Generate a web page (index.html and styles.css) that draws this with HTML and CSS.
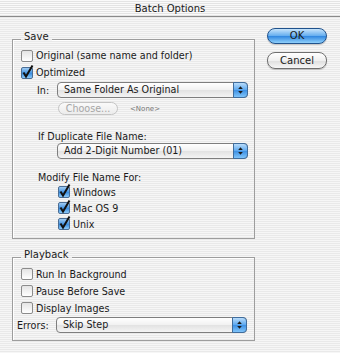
FILE: index.html
```html
<!DOCTYPE html>
<html lang="en">
<head>
  <meta charset="UTF-8" />
  <title>Batch Options</title>
  <link rel="stylesheet" href="styles.css">
</head>
<body>
  <div class="titlebar">Batch Options</div>

  <div class="dialog">
    <div class="groups">

      <div class="group save">
        <span class="legend">Save</span>
        <div class="check row"><span class="box"></span>Original (same name and folder)</div>
        <div class="check row"><span class="box on"><svg viewBox="0 0 12 12"><path d="M2.5 5.5 L5 9.5 L11.5 -1.5" /></svg></span>Optimized</div>

        <div class="in-row">
          <span class="field-label">In:</span>
          <div class="popup">Same Folder As Original<span class="arrows"><svg viewBox="0 0 14 14"><path d="M7 3 L9.5 6 L4.5 6 Z M7 11 L9.5 8 L4.5 8 Z" /></svg></span></div>
        </div>

        <div class="choose-row">
          <span class="choose">Choose...</span>
          <span class="none">&lt;None&gt;</span>
        </div>

        <div class="caption dup">If Duplicate File Name:</div>
        <div class="popup dup-popup">Add 2-Digit Number (01)<span class="arrows"><svg viewBox="0 0 14 14"><path d="M7 3 L9.5 6 L4.5 6 Z M7 11 L9.5 8 L4.5 8 Z" /></svg></span></div>

        <div class="caption modify">Modify File Name For:</div>
        <div class="os-list">
          <div class="check"><span class="box on"><svg viewBox="0 0 12 12"><path d="M2.5 5.5 L5 9.5 L11.5 -1.5" /></svg></span>Windows</div>
          <div class="check"><span class="box on"><svg viewBox="0 0 12 12"><path d="M2.5 5.5 L5 9.5 L11.5 -1.5" /></svg></span>Mac OS 9</div>
          <div class="check"><span class="box on"><svg viewBox="0 0 12 12"><path d="M2.5 5.5 L5 9.5 L11.5 -1.5" /></svg></span>Unix</div>
        </div>
      </div>

      <div class="group playback">
        <span class="legend">Playback</span>
        <div class="check row"><span class="box"></span>Run In Background</div>
        <div class="check row"><span class="box"></span>Pause Before Save</div>
        <div class="check row"><span class="box"></span>Display Images</div>
        <div class="errors-row">
          <span class="field-label">Errors:</span>
          <div class="popup">Skip Step<span class="arrows"><svg viewBox="0 0 14 14"><path d="M7 3 L9.5 6 L4.5 6 Z M7 11 L9.5 8 L4.5 8 Z" /></svg></span></div>
        </div>
      </div>

    </div>

    <div class="buttons">
      <div class="btn default">OK</div>
      <div class="btn cancel">Cancel</div>
    </div>
  </div>
</body>
</html>
```

FILE: styles.css
```css
body {
  margin: 0;
  font-family: "DejaVu Sans", sans-serif;
  font-size: 9.5px;
  color: #1a1a1a;
  background: repeating-linear-gradient(#f6f6f6 0 1px, #e9e9e9 1px 2px);
  background-attachment: fixed;
  height: 353px;
  overflow: hidden;
}

.titlebar {
  height: 16px;
  line-height: 17px;
  text-align: center;
  font-size: 10px;
  border-bottom: 1px solid #8a8a8a;
  background: repeating-linear-gradient(#fafafa 0 1px, #e4e4e4 1px 2px);
}

.dialog {
  display: flex;
}

.groups {
  margin-left: 12px;
  width: 243px;
}

.group {
  position: relative;
  box-sizing: border-box;
  border: 1px solid #9d9d9d;
  box-shadow: inset 1px 1px 0 #fff;
}

.legend {
  position: absolute;
  top: -9px;
  left: 8px;
  padding: 0 3px;
  line-height: 12px;
  font-size: 10px;
  background: repeating-linear-gradient(#f6f6f6 0 1px, #e9e9e9 1px 2px);
  background-attachment: fixed;
}

.save {
  margin-top: 22px;
  height: 200px;
  padding-top: 7px;
}

.playback {
  margin-top: 18px;
  height: 84px;
  padding-top: 8px;
}

.check {
  display: flex;
  align-items: center;
  height: 16px;
  font-size: 9.6px;
}

.check.row {
  height: 17px;
  padding-left: 8px;
}

.playback .check.row {
  height: 16px;
  margin-bottom: 1px;
}

.box {
  box-sizing: border-box;
  width: 12px;
  height: 12px;
  margin-right: 3px;
  border: 1px solid #8b8b8b;
  border-radius: 2px;
  background: linear-gradient(#e4e4e4, #ffffff);
  position: relative;
}

.box.on {
  border-color: #4a6d95;
  background: linear-gradient(#9fcbf2, #3d8fe0 55%, #8ccaf8);
}

.box svg {
  position: absolute;
  left: -1px;
  top: -1px;
  width: 12px;
  height: 12px;
  overflow: visible;
}

.box svg path {
  fill: none;
  stroke: #111;
  stroke-width: 2;
}

.in-row,
.errors-row {
  display: flex;
  align-items: center;
  font-size: 9.6px;
}

.in-row {
  margin-top: 1px;
  margin-left: 24px;
}

.in-row .field-label {
  width: 20px;
}

.errors-row {
  margin-top: 1px;
  margin-left: 4px;
}

.errors-row .field-label {
  width: 39px;
}

.popup {
  position: relative;
  box-sizing: border-box;
  width: 191px;
  height: 16px;
  line-height: 14px;
  padding-left: 6px;
  font-size: 9.6px;
  border: 1px solid #7e7e7e;
  border-radius: 4px;
  background: linear-gradient(#ffffff, #f1f1f1 50%, #e2e2e2 51%, #f4f4f4);
}

.arrows {
  position: absolute;
  top: -1px;
  right: -1px;
  width: 15px;
  height: 16px;
  box-sizing: border-box;
  border: 1px solid #3f6c9c;
  border-radius: 0 4px 4px 0;
  background: linear-gradient(#b9dcfa, #5aa7ef 50%, #3c8fe3 51%, #7fc4fa);
}

.arrows svg {
  display: block;
  width: 13px;
  height: 14px;
}

.arrows path {
  fill: #1b1b1b;
}

.choose-row {
  display: flex;
  align-items: center;
  margin-top: 4px;
  margin-left: 45px;
}

.choose {
  box-sizing: border-box;
  width: 60px;
  height: 13px;
  line-height: 11px;
  text-align: center;
  font-size: 9.6px;
  color: #a6a6a6;
  border: 1px solid #c4c4c4;
  border-radius: 7px;
  background: linear-gradient(#fafafa, #ececec);
}

.none {
  margin-left: 12px;
  font-size: 7px;
  color: #777;
}

.caption {
  margin-left: 25px;
  height: 12px;
  line-height: 12px;
  font-size: 9.6px;
}

.caption.dup {
  margin-top: 16px;
}

.dup-popup {
  margin-left: 44px;
}

.caption.modify {
  margin-top: 13px;
}

.os-list {
  margin-left: 45px;
}

.buttons {
  margin-left: 12px;
  padding-top: 11px;
  width: 60px;
}

.btn {
  box-sizing: border-box;
  height: 16px;
  line-height: 14px;
  margin-bottom: 8px;
  text-align: center;
  font-size: 10px;
  border: 1px solid #6f6f6f;
  border-radius: 8px;
  background: linear-gradient(#ffffff, #f0f0f0 50%, #dedede 51%, #f6f6f6);
  box-shadow: 0 1px 1px rgba(0,0,0,0.2);
}

.btn.cancel {
  height: 17px;
  line-height: 15px;
}

.btn.default {
  border-color: #20528c;
  background: linear-gradient(#c7e4fb, #62acef 50%, #2f86e0 51%, #8fd0fb);
}
```
